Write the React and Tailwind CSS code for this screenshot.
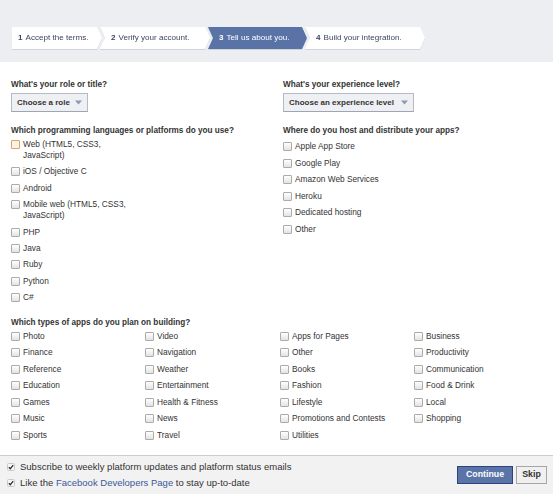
import React from 'react';

const steps = [
    { n: 1, label: 'Accept the terms.', w: 90, first: true },
    { n: 2, label: 'Verify your account.', w: 110 },
    { n: 3, label: 'Tell us about you.', w: 99, active: true },
    { n: 4, label: 'Build your integration.', w: 120 },
];

const languages = [
    'Web (HTML5, CSS3, JavaScript)',
    'iOS / Objective C',
    'Android',
    'Mobile web (HTML5, CSS3, JavaScript)',
    'PHP',
    'Java',
    'Ruby',
    'Python',
    'C#',
];

const hosting = ['Apple App Store', 'Google Play', 'Amazon Web Services', 'Heroku', 'Dedicated hosting', 'Other'];

const appTypes = [
    ['Photo', 'Finance', 'Reference', 'Education', 'Games', 'Music', 'Sports'],
    ['Video', 'Navigation', 'Weather', 'Entertainment', 'Health & Fitness', 'News', 'Travel'],
    ['Apps for Pages', 'Other', 'Books', 'Fashion', 'Lifestyle', 'Promotions and Contests', 'Utilities'],
    ['Business', 'Productivity', 'Communication', 'Food & Drink', 'Local', 'Shopping'],
];

// chevron shapes, one per step width
const shapes = {
    90: 'w-[90px] pl-[6px] [clip-path:polygon(0_0,85px_0,90px_50%,85px_100%,0_100%)]',
    110: 'w-[110px] -ml-[2px] pl-[11px] [clip-path:polygon(0_0,105px_0,110px_50%,105px_100%,0_100%,5px_50%)]',
    99: 'w-[99px] -ml-[2px] pl-[11px] [clip-path:polygon(0_0,94px_0,99px_50%,94px_100%,0_100%,5px_50%)]',
    120: 'w-[120px] -ml-[2px] pl-[11px] [clip-path:polygon(0_0,115px_0,120px_50%,115px_100%,0_100%,5px_50%)]',
};

const Step = ({ step }) => (
    <div
        className={`${shapes[step.w]} ${step.active ? 'bg-[#5a73a7] text-white' : 'bg-white text-[#3b4660]'} h-[22px] flex items-center text-[8.1px] whitespace-nowrap`}
    >
        <span className="font-bold mr-[3px]">{step.n}</span>
        {step.label}
    </div>
);

const Box = ({ focus }) => (
    <span
        className={`block shrink-0 w-[9px] h-[9px] mt-[1px] rounded-[1px] border ${focus ? 'border-[#dca468] bg-[#fbf1e4]' : 'border-[#ababab] bg-gradient-to-b from-white to-[#e3e3e3]'}`}
    />
);

const Check = ({ label, focus, wrap }) => (
    <label className="flex items-start gap-[3px] leading-[11px] text-[8.3px]">
        <Box focus={focus} />
        <span className={wrap ? 'w-[108px]' : 'whitespace-nowrap'}>{label}</span>
    </label>
);

const Select = ({ label, width }) => (
    <div
        className={`${width} h-[19px] flex items-center justify-between px-[5px] bg-[#eef0f4] border border-[#b5bac6] border-b-[#9ea5b4] font-bold text-[8px] text-[#333] whitespace-nowrap`}
    >
        <span>{label}</span>
        <svg width="7" height="5" viewBox="0 0 7 5">
            <path d="M0 0.5 L7 0.5 L3.5 4.5 Z" fill="#8b98b8" />
        </svg>
    </div>
);

const Tick = () => (
    <svg width="8" height="8" viewBox="0 0 8 8" className="shrink-0">
        <rect x="0.5" y="0.5" width="7" height="7" rx="1" fill="#f7f7f7" stroke="#c9c9c9" />
        <path d="M1.8 4.2 L3.3 5.7 L6.2 2.2" fill="none" stroke="#333" strokeWidth="1.3" />
    </svg>
);

export default function App() {
    return (
        <div className="w-[553px] h-[494px] flex flex-col bg-white text-[#333] font-['Liberation_Sans',Arial,sans-serif] overflow-hidden">
            <div className="h-[62px] shrink-0 bg-[#eceef2] pt-[27px] pl-[12px]">
                <div className="flex [filter:drop-shadow(0_1px_0_#cfd3dc)]">
                    {steps.map((s) => (
                        <Step key={s.n} step={s} />
                    ))}
                </div>
            </div>

            <div className="flex-1 pt-[17px]">
                <div className="grid grid-cols-[272px_1fr] pl-[11px]">
                    <div>
                        <h3 className="font-bold leading-[12px] text-[8.2px]">What's your role or title?</h3>
                        <div className="mt-[2px]">
                            <Select label="Choose a role" width="w-[77px]" />
                        </div>
                        <h3 className="mt-[13px] font-bold leading-[12px] text-[8.2px]">Which programming languages or platforms do you use?</h3>
                        <div className="mt-[2px] flex flex-col gap-[5.4px]">
                            {languages.map((l, i) => (
                                <Check key={l} label={l} focus={i === 0} wrap={l.length > 20} />
                            ))}
                        </div>
                    </div>
                    <div>
                        <h3 className="font-bold leading-[12px] text-[8.2px]">What's your experience level?</h3>
                        <div className="mt-[2px]">
                            <Select label="Choose an experience level" width="w-[131px]" />
                        </div>
                        <h3 className="mt-[13px] font-bold leading-[12px] text-[8.2px]">Where do you host and distribute your apps?</h3>
                        <div className="mt-[4px] flex flex-col gap-[5.5px]">
                            {hosting.map((h) => (
                                <Check key={h} label={h} />
                            ))}
                        </div>
                    </div>
                </div>

                <div className="pl-[11px] mt-[14px]">
                    <h3 className="font-bold leading-[12px] text-[8.2px]">Which types of apps do you plan on building?</h3>
                    <div className="mt-[1.5px] grid grid-cols-[134px_135px_134px_1fr]">
                        {appTypes.map((col, ci) => (
                            <div key={ci} className="flex flex-col gap-[5.5px]">
                                {col.map((a) => (
                                    <Check key={a} label={a} />
                                ))}
                            </div>
                        ))}
                    </div>
                </div>
            </div>

            <div className="h-[39px] shrink-0 border-t border-[#cccccc] bg-[#f2f2f2] flex items-center justify-between pl-[7px] pr-[6px]">
                <div className="leading-[16px] text-[9.5px]">
                    <div className="flex items-center gap-[5px]">
                        <Tick />
                        <span>Subscribe to weekly platform updates and platform status emails</span>
                    </div>
                    <div className="flex items-center gap-[5px]">
                        <Tick />
                        <span>
                            Like the <a className="text-[#3b5998]">Facebook Developers Page</a> to stay up-to-date
                        </span>
                    </div>
                </div>
                <div className="flex items-center gap-[3px]">
                    <button className="h-[18px] w-[56px] bg-[#5b74a8] border border-[#29447e] text-white font-bold text-[8.8px]">
                        Continue
                    </button>
                    <button className="h-[18px] w-[31px] bg-[#f0f0f0] border border-[#a6a6a6] text-[#333] font-bold text-[8.8px]">
                        Skip
                    </button>
                </div>
            </div>
        </div>
    );
}
